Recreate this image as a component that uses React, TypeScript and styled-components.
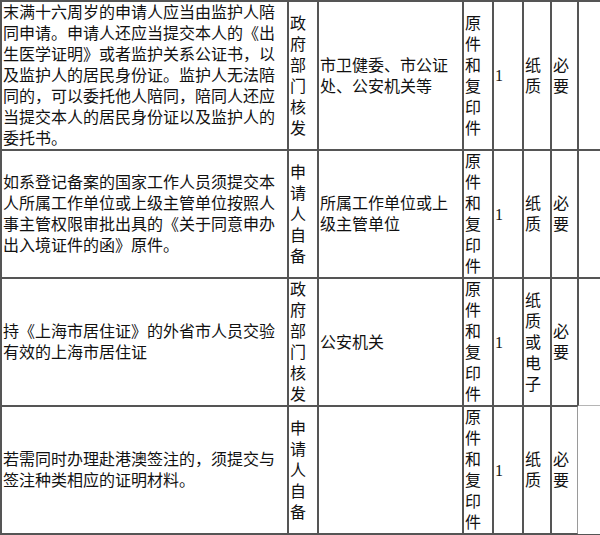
import React from 'react';
import styled, { createGlobalStyle } from 'styled-components';

const GlobalStyle = createGlobalStyle`
  html, body {
    margin: 0;
    padding: 0;
    background: #fff;
    overflow: hidden;
  }
`;

interface RowData {
  desc: string;
  source: string;
  issuer: string;
  form: string;
  count: string;
  medium: string;
  need: string;
  hasTail: boolean;
}

const rows: RowData[] = [
  {
    desc: '末满十六周岁的申请人应当由监护人陪同申请。申请人还应当提交本人的《出生医学证明》或者监护关系公证书，以及监护人的居民身份证。监护人无法陪同的，可以委托他人陪同，陪同人还应当提交本人的居民身份证以及监护人的委托书。',
    source: '政府部门核发',
    issuer: '市卫健委、市公证处、公安机关等',
    form: '原件和复印件',
    count: '1',
    medium: '纸质',
    need: '必要',
    hasTail: true
  },
  {
    desc: '如系登记备案的国家工作人员须提交本人所属工作单位或上级主管单位按照人事主管权限审批出具的《关于同意申办出入境证件的函》原件。',
    source: '申请人自备',
    issuer: '所属工作单位或上级主管单位',
    form: '原件和复印件',
    count: '1',
    medium: '纸质',
    need: '必要',
    hasTail: true
  },
  {
    desc: '持《上海市居住证》的外省市人员交验有效的上海市居住证',
    source: '政府部门核发',
    issuer: '公安机关',
    form: '原件和复印件',
    count: '1',
    medium: '纸质或电子',
    need: '必要',
    hasTail: true
  },
  {
    desc: '若需同时办理赴港澳签注的，须提交与签注种类相应的证明材料。',
    source: '申请人自备',
    issuer: '',
    form: '原件和复印件',
    count: '1',
    medium: '纸质',
    need: '必要',
    hasTail: false
  }
];

// border-box width of each column, px
const widths = [287, 30, 145, 30, 30, 28, 27, 41];

const Frame = styled.div`
  width: 600px;
  height: 535px;
  overflow: hidden;
`;

const Table = styled.table`
  width: 619px;
  table-layout: fixed;
  border-collapse: separate;
  border-spacing: 0;
  border: 1px solid #555;
  font-family: 'Liberation Serif', 'Noto Sans CJK SC', serif;
  font-size: 16px;
  line-height: 21px;
  color: #111;
`;

const Col = styled.col<{ $w: number }>`
  width: ${(p) => p.$w}px;
`;

const Cell = styled.td<{ $lightRight?: boolean; $lightBottom?: boolean }>`
  border: 1px solid #555;
  border-right-color: ${(p) => (p.$lightRight ? '#9a9a9a' : '#555')};
  border-bottom-color: ${(p) => (p.$lightBottom ? '#b5b5b5' : '#555')};
  padding: 0 1px;
  vertical-align: middle;
  text-align: left;
  word-break: break-all;
`;

const App: React.FC = () => {
  return (
    <Frame>
      <GlobalStyle />
      <Table>
        <colgroup>
          {widths.map((w, i) => (
            <Col
              $w={w}
              key={i}
            />
          ))}
        </colgroup>
        <tbody>
          {rows.map((row, i) => {
            const nextMissing = i + 1 < rows.length && !rows[i + 1].hasTail;

            return (
              <tr key={i}>
                <Cell>{row.desc}</Cell>
                <Cell>{row.source}</Cell>
                <Cell>{row.issuer}</Cell>
                <Cell>{row.form}</Cell>
                <Cell>{row.count}</Cell>
                <Cell>{row.medium}</Cell>
                <Cell $lightRight={!row.hasTail}>{row.need}</Cell>
                {row.hasTail && <Cell $lightBottom={nextMissing} />}
              </tr>
            );
          })}
        </tbody>
      </Table>
    </Frame>
  );
};

export default App;
